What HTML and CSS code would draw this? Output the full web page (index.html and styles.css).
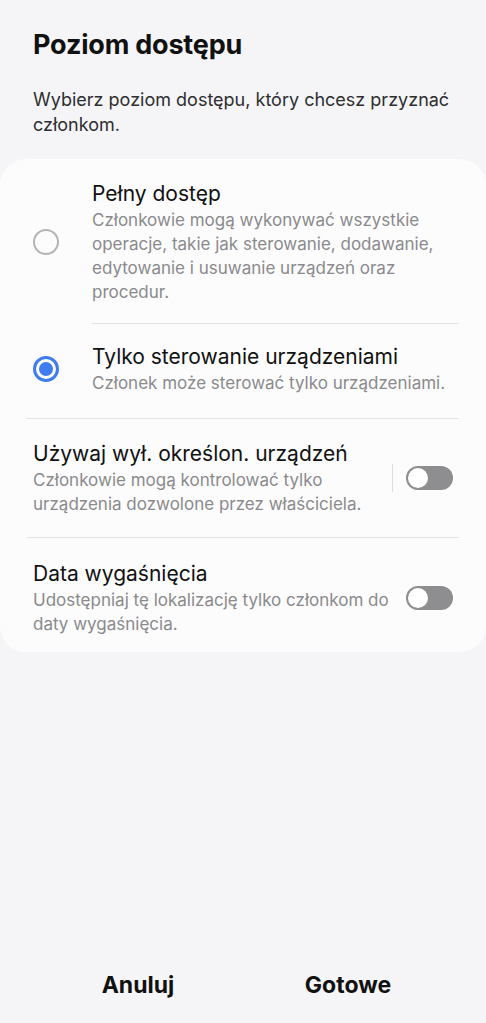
FILE: index.html
```html
<!DOCTYPE html>
<html lang="pl">
<head>
<meta charset="utf-8">
<link rel="stylesheet" href="styles.css">
</head>
<body>
<div class="screen">
  <h1 class="title">Poziom dostępu</h1>
  <p class="intro">Wybierz poziom dostępu, który chcesz przyznać członkom.</p>
  <div class="card">
    <div class="radio-row first">
      <span class="radio"></span>
      <div class="texts">
        <div class="item-title">Pełny dostęp</div>
        <div class="item-desc">Członkowie mogą wykonywać wszystkie operacje, takie jak sterowanie, dodawanie, edytowanie i usuwanie urządzeń oraz procedur.</div>
      </div>
    </div>
    <div class="divider indent"></div>
    <div class="radio-row second">
      <span class="radio on"></span>
      <div class="texts">
        <div class="item-title">Tylko sterowanie urządzeniami</div>
        <div class="item-desc">Członek może sterować tylko urządzeniami.</div>
      </div>
    </div>
    <div class="divider"></div>
    <div class="switch-row third">
      <div class="texts">
        <div class="item-title">Używaj wył. określon. urządzeń</div>
        <div class="item-desc">Członkowie mogą kontrolować tylko urządzenia dozwolone przez właściciela.</div>
      </div>
      <span class="vsep"></span>
      <span class="toggle"><span class="knob"></span></span>
    </div>
    <div class="divider"></div>
    <div class="switch-row last">
      <div class="texts">
        <div class="item-title">Data wygaśnięcia</div>
        <div class="item-desc">Udostępniaj tę lokalizację tylko członkom do daty wygaśnięcia.</div>
      </div>
      <span class="toggle"><span class="knob"></span></span>
    </div>
  </div>
  <div class="spacer"></div>
  <div class="actions">
    <button class="btn">Anuluj</button>
    <button class="btn">Gotowe</button>
  </div>
</div>
</body>
</html>
```
FILE: styles.css
```css
* { box-sizing: border-box; }
html, body { margin: 0; padding: 0; }
body {
  background: #f5f5f7;
  font-family: "Inter", "Roboto", "Noto Sans", sans-serif;
  width: 486px;
  height: 1023px;
  overflow: hidden;
}
.screen {
  display: flex;
  flex-direction: column;
  height: 1023px;
}
.title {
  margin: 0;
  padding: 28px 33px 0;
  font-size: 27px;
  font-weight: 700;
  line-height: 34px;
  color: #111;
  letter-spacing: -0.2px;
}
.intro {
  margin: 0;
  padding: 25px 30px 0 33px;
  font-size: 18px;
  line-height: 25px;
  color: #2e2e30;
}
.card {
  margin-top: 22px;
  background: #fcfcfd;
  border-radius: 26px;
  padding: 0 27px;
}
.radio-row {
  display: flex;
  align-items: center;
}
.radio-row.first { padding: 21px 0 19px; }
.radio-row.second { padding: 19px 0 23px; }
.radio {
  flex: none;
  width: 26px;
  height: 26px;
  border-radius: 50%;
  border: 2px solid #b4b4b6;
  margin: 0 33px 0 6px;
  position: relative;
}
.radio.on {
  border: 3px solid #3e7cf0;
}
.radio.on::after {
  content: "";
  position: absolute;
  left: 3px; top: 3px;
  width: 14px; height: 14px;
  border-radius: 50%;
  background: #3e7cf0;
}
.texts { flex: 1; min-width: 0; }
.item-title {
  font-size: 21px;
  line-height: 28px;
  color: #111;
}
.item-desc {
  font-size: 17px;
  line-height: 24px;
  color: #8a8a8c;
}
.divider {
  height: 1px;
  background: #e2e2e4;
}
.divider.indent { margin-left: 65px; }
.switch-row {
  display: flex;
  align-items: center;
  padding-left: 6px;
  padding-right: 6px;
}
.switch-row.third { padding-top: 21px; padding-bottom: 21px; }
.switch-row.last { padding-top: 22px; padding-bottom: 16px; }
.vsep {
  flex: none;
  width: 1px;
  height: 28px;
  background: #dcdcde;
  margin: 0 13px 0 8px;
}
.toggle {
  flex: none;
  width: 47px;
  height: 24px;
  border-radius: 12px;
  background: #8e8e90;
  position: relative;
  margin-left: 12px;
}
.switch-row .vsep + .toggle { margin-left: 0; }
.knob {
  position: absolute;
  left: 2px; top: 2px;
  width: 20px; height: 20px;
  border-radius: 50%;
  background: #fff;
}
.spacer { flex: 1; }
.actions {
  display: flex;
  justify-content: space-around;
  padding: 0 33px 14px;
}
.btn {
  background: none;
  border: 0;
  font-family: inherit;
  font-size: 23px;
  font-weight: 700;
  color: #111;
  padding: 10px 0;
  width: 200px;
}
```
